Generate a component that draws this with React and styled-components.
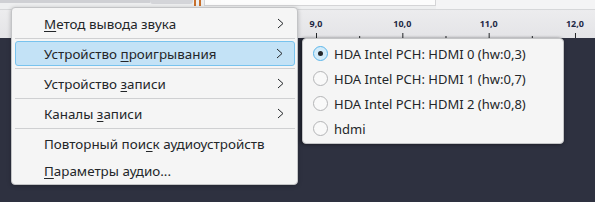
import React from "react"
import styled, { createGlobalStyle } from "styled-components"

const GlobalStyle = createGlobalStyle`
  html, body {
    margin: 0;
    padding: 0;
    background: #2e3140;
  }
  body {
    font-family: "Noto Sans", "DejaVu Sans", sans-serif;
    font-size: 13px;
    color: #232629;
  }
`

const mainItems = [
  { before: "", key: "М", after: "етод вывода звука", sub: true },
  { before: "Устройство ", key: "п", after: "роигрывания", sub: true, active: true },
  { before: "Устройство ", key: "з", after: "аписи", sub: true },
  { before: "Каналы ", key: "з", after: "аписи", sub: true },
  { before: "Повторный пои", key: "с", after: "к аудиоустройств" },
  { before: "", key: "П", after: "араметры аудио..." },
]

const devices = [
  { label: "HDA Intel PCH: HDMI 0 (hw:0,3)", checked: true },
  { label: "HDA Intel PCH: HDMI 1 (hw:0,7)" },
  { label: "HDA Intel PCH: HDMI 2 (hw:0,8)" },
  { label: "hdmi" },
]

// only the part of the ruler right of the menu is visible
const rulerMarks = [9, 10, 11, 12]
const unit = 86.33
const originX = 316 - 9 * unit

export default function App() {
  return (
    <Page>
      <GlobalStyle />
      <TopStrip>
        <ScrollTrack />
        <ScrollThumb />
        <Playhead />
        <ClipBox />
        <TopFill />
      </TopStrip>
      <Ruler>
        <svg width="595" height="28">
          {rulerMarks.map((m) => {
            const x = originX + m * unit
            return (
              <g key={m}>
                <text
                  x={x}
                  y="17"
                  textAnchor="middle"
                  fontSize="9"
                  fontWeight="700"
                  fill="#1f2946"
                  fontFamily="Noto Sans, sans-serif"
                >
                  {m},0
                </text>
                <line x1={x + 0.5} y1="23" x2={x + 0.5} y2="28" stroke="#232629" />
                <line x1={x + unit / 2 + 0.5} y1="26" x2={x + unit / 2 + 0.5} y2="28" stroke="#232629" />
              </g>
            )
          })}
        </svg>
      </Ruler>
      <Track />

      <Menu>
        {mainItems.map((it, i) => (
          <React.Fragment key={i}>
            <Row $active={it.active}>
              <Label>
                {it.before}
                <Key>{it.key}</Key>
                {it.after}
              </Label>
              {it.sub && (
                <svg width="7" height="11" viewBox="0 0 7 11">
                  <polyline points="1,1 6,5.5 1,10" fill="none" stroke="#232629" strokeWidth="1" />
                </svg>
              )}
            </Row>
            {it.sub && <Separator />}
          </React.Fragment>
        ))}
      </Menu>

      <SubMenu>
        {devices.map((d) => (
          <RadioRow key={d.label}>
            <Radio $checked={d.checked} />
            {d.label}
          </RadioRow>
        ))}
      </SubMenu>
    </Page>
  )
}

const Page = styled.div`
  position: relative;
  width: 595px;
  height: 202px;
  overflow: hidden;
  display: flex;
  flex-direction: column;
  background: #2e3140;
`

const TopStrip = styled.div`
  display: flex;
  align-items: flex-start;
  height: 9px;
  background: #eeeff0;
  border-bottom: 1px solid #d6d7d9;
`

const ScrollTrack = styled.div`
  width: 150px;
  height: 3px;
  background: #cfd0d4;
`

const ScrollThumb = styled.div`
  width: 43px;
  height: 4px;
  background: #d4d5d9;
  border-radius: 0 0 3px 3px;
`

const Playhead = styled.div`
  width: 3px;
  height: 6px;
  margin: 0 3px 0 1px;
  border-left: 2px solid #c8702c;
  border-right: 2px solid #c8702c;
`

const ClipBox = styled.div`
  width: 230px;
  height: 5px;
  background: #fcfcfc;
  border: 1px solid #d4d4d6;
  border-top: none;
`

const TopFill = styled.div`
  flex: 1;
  height: 9px;
  background: #f4f4f5;
`

const Ruler = styled.div`
  height: 28px;
  background: linear-gradient(#ececee, #e4e4e7);
  svg {
    display: block;
  }
`

const Track = styled.div`
  flex: 1;
  background: #2e3140;
`

const Menu = styled.div`
  position: absolute;
  left: 11px;
  top: 7px;
  width: 287px;
  box-sizing: border-box;
  padding: 1px 0 0;
  font-size: 13.4px;
  background: #f5f5f5;
  border: 1px solid #c3c4c6;
  border-radius: 4px;
  box-shadow: 0 1px 4px rgba(0, 0, 0, 0.25);
`

const Row = styled.div`
  display: flex;
  align-items: center;
  justify-content: space-between;
  height: 25px;
  margin: 2px 2px 2px 3px;
  box-sizing: border-box;
  padding: 0 11px 0 ${(p) => (p.$active ? 28 : 29)}px;
  background: ${(p) => (p.$active ? "#c3e2f6" : "transparent")};
  border: ${(p) => (p.$active ? "1px solid #78c3ee" : "none")};
  border-radius: 3px;
  &:last-child {
    margin-bottom: 1px;
  }
`

const Label = styled.span`
  white-space: nowrap;
`

const Key = styled.u`
  text-decoration-thickness: 1px;
  text-underline-offset: 2px;
`

const Separator = styled.div`
  height: 1px;
  margin: 0 2px 0 3px;
  background: #cfd0d2;
`

const SubMenu = styled.div`
  position: absolute;
  left: 302px;
  top: 38px;
  width: 262px;
  box-sizing: border-box;
  padding: 2px 0;
  background: #f5f5f5;
  border: 1px solid #c3c4c6;
  border-radius: 4px;
  box-shadow: -2px 0 3px rgba(0, 0, 0, 0.35), 0 1px 4px rgba(0, 0, 0, 0.2);
`

const RadioRow = styled.div`
  display: flex;
  align-items: center;
  gap: 6px;
  height: 25px;
  padding-left: 10px;
  white-space: nowrap;
`

const Radio = styled.span`
  position: relative;
  width: 15px;
  height: 15px;
  box-sizing: border-box;
  border-radius: 50%;
  border: 1px solid ${(p) => (p.$checked ? "#5cb6ea" : "#b3b4b6")};
  background: ${(p) => (p.$checked ? "#d3ebf9" : "#f9f9f9")};
  &::after {
    content: "";
    display: ${(p) => (p.$checked ? "block" : "none")};
    position: absolute;
    left: 4px;
    top: 4px;
    width: 5px;
    height: 5px;
    border-radius: 50%;
    background: #232629;
  }
`
